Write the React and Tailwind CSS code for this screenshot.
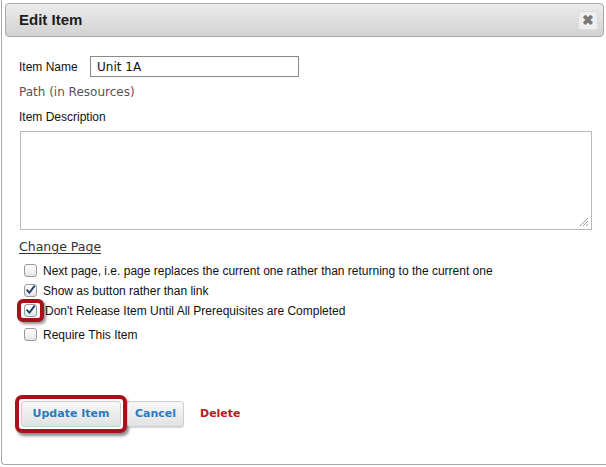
import React from 'react';

const verdana = { fontFamily: '"DejaVu Sans", Verdana, sans-serif' };

function Check({ checked }) {
  return (
    <span className="w-[13px] h-[13px] rounded-[3px] border border-[#9a9a9a] bg-gradient-to-b from-white to-[#e6e6e6] flex items-center justify-center shrink-0">
      {checked && (
        <svg width="12" height="12" viewBox="0 0 12 12" className="-mt-[1px]">
          <path d="M2.2 6.2 L4.8 9 L10.2 1.8" fill="none" stroke="#1f3a66" strokeWidth="2" strokeLinecap="round" strokeLinejoin="round" />
        </svg>
      )}
    </span>
  );
}

export default function App() {
  const options = [
    { label: 'Next page, i.e. page replaces the current one rather than returning to the current one', checked: false },
    { label: 'Show as button rather than link', checked: true },
    { label: "Don't Release Item Until All Prerequisites are Completed", checked: true, ring: true },
    { label: 'Require This Item', checked: false },
  ];

  return (
    <div className="w-[606px] h-[467px] bg-white overflow-hidden" style={{ fontFamily: '"Liberation Sans", Arial, sans-serif' }}>
      <div className="ml-[1px] w-[606px] h-[465px] border-l border-b border-[#a8a8a8] rounded-bl-[4px] flex flex-col">
        {/* title bar */}
        <div className="mt-[3px] ml-[3px] mr-[3px] h-[34px] rounded-[4px] border border-[#a9a9a9] bg-gradient-to-b from-[#ececec] to-[#d2d2d2] flex items-center justify-between pl-[13px] pr-[5px]">
          <span className="text-[15px] font-bold text-[#1e1e1e]">Edit Item</span>
          <span className="w-[20px] h-[19px] rounded-[3px] bg-[#efefef] border border-[#dcdcdc] flex items-center justify-center text-[#777] text-[14px] font-bold leading-none">✖</span>
        </div>

        <div className="flex flex-col pl-[17px] pr-[13px]">
          <div className="flex items-center mt-[19px] h-[21px]">
            <span className="text-[12px] text-[#111] w-[71px]">Item Name</span>
            <div className="w-[209px] h-[21px] border border-[#8a8a8a] flex items-center pl-[6px] text-[12px] text-[#111]" style={verdana}>Unit 1A</div>
          </div>
          <div className="mt-[6px] text-[12px] text-[#555]" style={verdana}>Path (in Resources)</div>
          <div className="mt-[7px] text-[12px] text-[#111]">Item Description</div>
          <div className="mt-[5px] ml-[1px] w-[572px] h-[99px] border border-[#b8b8b8] relative">
            <svg width="10" height="10" viewBox="0 0 10 10" className="absolute right-[2px] bottom-[2px]">
              <path d="M9 1 L1 9 M9 4 L4 9 M9 7 L7 9" stroke="#999" strokeWidth="1" />
            </svg>
          </div>
          <div className="mt-[8px] text-[12.5px] text-[#333] underline underline-offset-2" style={verdana}>Change Page</div>

          <div className="flex flex-col mt-[4px] ml-[5px]">
            {options.map((o, i) => (
              <div key={i} className={`flex items-center h-[20px] ${i === 3 ? 'mt-[4px]' : ''}`}>
                {o.ring ? (
                  <span className="-ml-[7px] w-[27px] h-[23px] rounded-[6px] border-[4px] border-[#a8111a] shadow-[2px_2px_3px_rgba(0,0,0,0.45)] flex items-center justify-center bg-white">
                    <Check checked={o.checked} />
                  </span>
                ) : (
                  <Check checked={o.checked} />
                )}
                <span className={`${o.ring ? 'ml-[1px]' : 'ml-[6px]'} text-[12px] text-[#111]`}>{o.label}</span>
              </div>
            ))}
          </div>

          <div className="flex items-center mt-[50px]">
            <div className="-ml-[4px] rounded-[7px] border-[4px] border-[#a8111a] shadow-[2px_3px_3px_rgba(0,0,0,0.45)] p-[2px] bg-white">
              <div className="h-[26px] w-[100px] justify-center rounded-[3px] border border-[#cfcfcf] bg-gradient-to-b from-[#f8f8f8] to-[#e2e2e2] flex items-center text-[11px] font-bold text-[#2b7ac0]" style={verdana}>Update Item</div>
            </div>
            <div className="h-[26px] w-[57px] justify-center rounded-[3px] border border-[#cfcfcf] bg-gradient-to-b from-[#f8f8f8] to-[#e2e2e2] flex items-center text-[11px] font-bold text-[#2b7ac0] shadow-[0_1px_1px_rgba(0,0,0,0.15)]" style={verdana}>Cancel</div>
            <span className="ml-[16px] text-[11px] font-bold text-[#c4161c]" style={verdana}>Delete</span>
          </div>
        </div>
      </div>
    </div>
  );
}
